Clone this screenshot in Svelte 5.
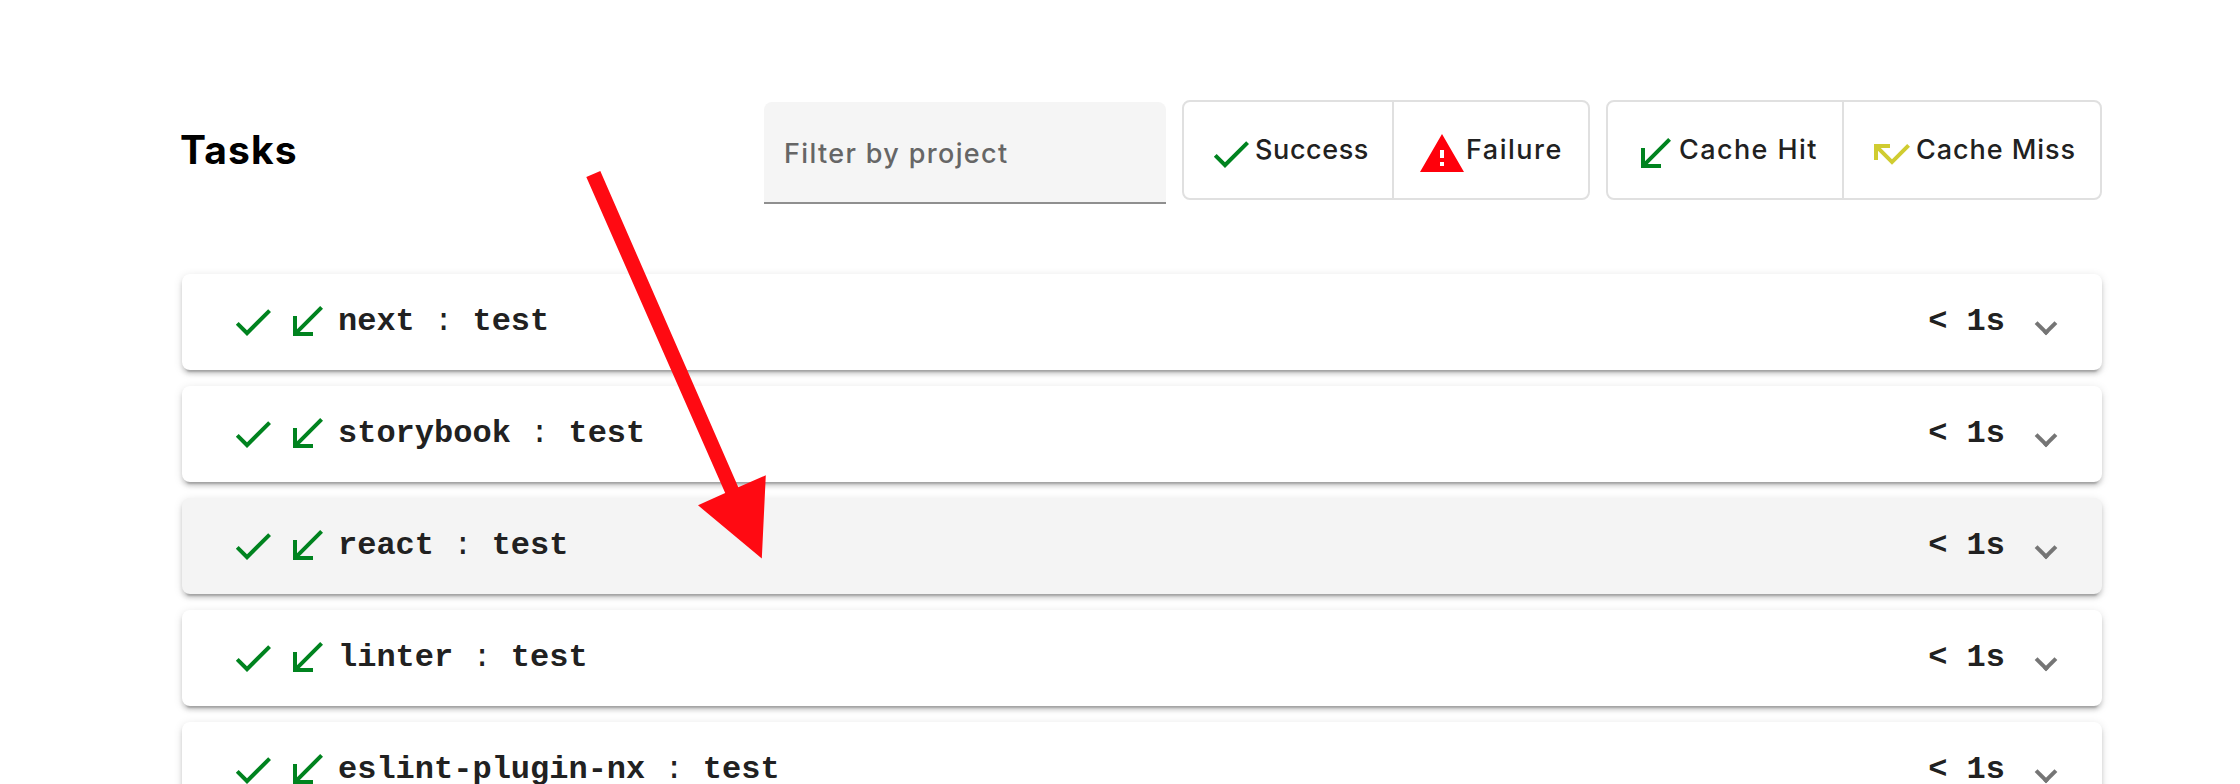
<script>
  const icons = {
    check: 'M9 16.17L4.83 12l-1.42 1.41L9 19 21 7l-1.41-1.41z',
    hit: 'M20 5.41L18.59 4 7 15.59V9H5v10h10v-2H8.41z',
    miss: 'M19.59 7L12 14.59 6.41 9H11V7H3v8h2v-4.59l7 7 9-9z',
    warning: 'M1 21h22L12 2 1 21zm12-3h-2v-2h2v2zm0-4h-2v-4h2v4z'
  };
  const groups = [
    [
      { label: 'Success', icon: 'check', tone: 'green', cls: 'success' },
      { label: 'Failure', icon: 'warning', tone: 'red', cls: 'failure' }
    ],
    [
      { label: 'Cache Hit', icon: 'hit', tone: 'green', cls: 'cache-hit' },
      { label: 'Cache Miss', icon: 'miss', tone: 'yellow', cls: 'cache-miss' }
    ]
  ];
  const tasks = ['next', 'storybook', 'react', 'linter', 'eslint-plugin-nx'];
  const hovered = 'react';
</script>

{#snippet icon(name, tone)}
  <svg class="icon {tone}" viewBox="0 0 24 24" aria-hidden="true"><path d={icons[name]} /></svg>
{/snippet}

<main class="page">
  <header class="toolbar">
    <h1><span>Tasks</span></h1>
    <label class="filter"><input type="text" placeholder="Filter by project" /></label>
    {#each groups as group}
      <div class="toggle-group">
        {#each group as item}
          <button class="toggle {item.cls}">
            {@render icon(item.icon, item.tone)}
            <span>{item.label}</span>
          </button>
        {/each}
      </div>
    {/each}
  </header>

  <section class="tasks">
    {#each tasks as task}
      <article class="task" class:hovered={task === hovered}>
        {@render icon('check', 'green')}
        {@render icon('hit', 'green')}
        <span class="name">{task} <i>:</i> test</span>
        <span class="time">&lt; 1s</span>
        <span class="chevron"></span>
      </article>
    {/each}
  </section>

  <svg class="arrow" viewBox="0 0 180 390" aria-hidden="true">
    <path d="M0.3 7L14.3 1L152.3 317.3L179.8 305.3L175.8 388.5L112 335.3L139.2 323Z" />
  </svg>
</main>

<style>
  :global(body) {
    margin: 0;
    background: #fff;
    overflow: hidden;
  }
  .page {
    position: relative;
    box-sizing: border-box;
    width: 2240px;
    height: 784px;
    padding: 100px 138px 0 182px;
    overflow: hidden;
    font-family: Inter, sans-serif;
    color: #212121;
  }
  .toolbar {
    display: flex;
    align-items: flex-start;
    height: 174px;
    width: 1920px;
  }
  h1 {
    flex: 1;
    margin: 0 0 0 -2px;
    font-size: 39px;
    line-height: 99px;
    font-weight: 700;
    letter-spacing: 1.1px;
    color: #000;
  }
  .filter {
    box-sizing: border-box;
    width: 402px;
    height: 102px;
    margin: 2px 16px 0 0;
    padding: 3px 20px 0;
    background: #f5f5f5;
    border-bottom: 2px solid #8f8f8f;
    border-radius: 8px 8px 0 0;
  }
  input {
    width: 100%;
    height: 100%;
    padding: 0;
    border: 0;
    outline: 0;
    background: none;
    font: 500 27px Inter, sans-serif;
    letter-spacing: 1.35px;
  }
  input::placeholder {
    color: #666;
    opacity: 1;
  }
  .toggle-group {
    box-sizing: border-box;
    display: flex;
    height: 100px;
    border: 2px solid #e0e0e0;
    border-radius: 8px;
  }
  .toggle-group + .toggle-group {
    margin-left: 16px;
  }
  .toggle {
    box-sizing: border-box;
    display: flex;
    align-items: center;
    padding: 0 0 0 24px;
    border: 0;
    background: none;
    font: 500 27px/98px Inter, sans-serif;
    color: #212121;
    white-space: nowrap;
  }
  .toggle + .toggle {
    border-left: 2px solid #e0e0e0;
  }
  .toggle .icon {
    margin-top: 8px;
  }
  .success { width: 208px; padding-left: 23px; letter-spacing: 0.6px; }
  .failure { width: 196px; letter-spacing: 1.5px; }
  .cache-hit { width: 234px; padding-left: 23px; letter-spacing: 1.4px; }
  .cache-miss { width: 258px; letter-spacing: 0.95px; }
  .icon {
    flex: none;
    width: 48px;
    height: 48px;
  }
  .green { fill: #00831f; }
  .red { fill: #ff000b; }
  .yellow { fill: #d0cc30; }
  .tasks {
    display: flex;
    flex-direction: column;
    gap: 16px;
    width: 1920px;
  }
  .task {
    box-sizing: border-box;
    display: flex;
    align-items: center;
    height: 96px;
    padding: 0 48px 0 47px;
    border-radius: 8px;
    background: #fff;
    box-shadow:
      0 6px 2px -4px rgba(0, 0, 0, 0.2),
      0 4px 4px 0 rgba(0, 0, 0, 0.14),
      0 2px 10px 0 rgba(0, 0, 0, 0.12);
    font: 700 32px/96px 'Courier New', 'Liberation Mono', monospace;
    white-space: pre;
  }
  .hovered {
    background: #f4f4f4;
  }
  .task .icon + .icon {
    margin-left: 6px;
  }
  .name {
    flex: 1;
    margin-left: 7px;
  }
  .name i {
    font-style: normal;
    font-weight: 400;
  }
  .time {
    margin-right: 33px;
  }
  .chevron {
    box-sizing: border-box;
    width: 16px;
    height: 16px;
    margin-top: 3px;
    border: solid #757575;
    border-width: 0 4px 4px 0;
    transform: rotate(45deg);
  }
  .arrow {
    position: absolute;
    left: 586px;
    top: 170px;
    width: 180px;
    height: 390px;
    fill: #ff0a12;
  }
</style>
